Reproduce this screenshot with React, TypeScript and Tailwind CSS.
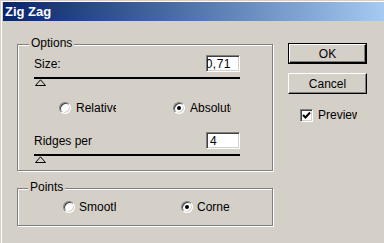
import React from 'react';

const font = { fontFamily: '"Liberation Sans", Arial, sans-serif' };

const Radio = ({ checked }: { checked?: boolean }) => (
  <span className="relative w-[12px] h-[12px] rounded-full bg-white border border-t-[#808080] border-l-[#808080] border-b-white border-r-white shadow-[inset_1px_1px_0_#404040,inset_-1px_-1px_0_#d4d0c8] shrink-0 flex items-center justify-center">
    {checked && <span className="w-[4px] h-[4px] rounded-full bg-black" />}
  </span>
);

const Field = ({ value, clip }: { value: string; clip?: boolean }) => (
  <div className="w-[34px] h-[17px] bg-white border border-t-[#808080] border-l-[#808080] border-b-white border-r-white shadow-[inset_1px_1px_0_#404040,inset_-1px_-1px_0_#d4d0c8] overflow-hidden flex items-center">
    {clip ? (
      <div className="w-full flex justify-end pr-[8px] text-[12px] leading-[14px] tracking-[0.5px] whitespace-nowrap">{value}</div>
    ) : (
      <div className="pl-[3px] text-[12px] leading-[14px]">{value}</div>
    )}
  </div>
);

const Slider = () => (
  <div className="flex flex-col">
    <div className="h-[2px] w-full bg-black" />
    <svg width="12" height="7" viewBox="0 0 12 7" className="ml-[1px]">
      <path d="M0.5 6.5 L5.5 0.8 L10.5 6.5 Z" fill="#d4d0c8" stroke="#000" strokeWidth="1" />
    </svg>
  </div>
);

const Option = ({ checked, label, w, gap = 'ml-[5px]' }: { checked?: boolean; label: string; w: string; gap?: string }) => (
  <div className="flex items-center">
    <Radio checked={checked} />
    <span className={`${gap} ${w} overflow-hidden whitespace-nowrap text-[12px] leading-[14px]`}>{label}</span>
  </div>
);

const Group = ({ title, legendLeft, className, children }: { title: string; legendLeft: string; className: string; children: React.ReactNode }) => (
  <div className={`relative border border-[#808080] shadow-[inset_1px_1px_0_#fff,1px_1px_0_#fff] ${className}`}>
    <span className={`absolute top-[-9px] ${legendLeft} px-[2px] bg-[#d4d0c8] text-[12px] leading-[14px]`}>{title}</span>
    {children}
  </div>
);

const Button = ({ label, isDefault }: { label: string; isDefault?: boolean }) => (
  <div className={`w-[79px] h-[21px] ${isDefault ? 'border border-black' : ''}`}>
    <div className="w-full h-full border border-t-white border-l-white border-b-black border-r-black shadow-[inset_-1px_-1px_0_#808080] flex items-center justify-center text-[12px] leading-[14px]">
      {label}
    </div>
  </div>
);

export default function App() {
  return (
    <div className="w-[384px] h-[243px] overflow-hidden bg-[#d4d0c8] text-black shadow-[inset_1px_1px_0_#d4d0c8,inset_2px_2px_0_#fff]" style={font}>
      {/* Title bar */}
      <div className="mt-[2px] ml-[3px] h-[19px] bg-gradient-to-r from-[#0a246a] to-[#a6caf0] flex items-center pl-[2px]">
        <span className="text-white font-bold text-[13px] leading-[15px]">Zig Zag</span>
      </div>

      <div className="flex pl-[17px] pt-[22px]">
        {/* Left column */}
        <div className="w-[256px] mt-[1px] flex flex-col">
          <Group title="Options" legendLeft="left-[11px]" className="h-[127px] pl-[16px] pr-[32px] pt-[10px]">
            <div className="flex items-center justify-between">
              <span className="text-[12px] leading-[14px]">Size:</span>
              <Field value="0,71" clip />
            </div>
            <div className="mt-[5px]">
              <Slider />
            </div>
            <div className="mt-[15px] pl-[25px] flex">
              <div className="w-[114px]">
                <Option label="Relative" w="w-[40px]" />
              </div>
              <Option checked label="Absolute" w="w-[41px]" />
            </div>
            <div className="mt-[17px] flex items-center justify-between">
              <span className="text-[12px] leading-[14px]">Ridges per</span>
              <Field value="4" />
            </div>
            <div className="mt-[5px]">
              <Slider />
            </div>
          </Group>

          <Group title="Points" legendLeft="left-[10px]" className="mt-[17px] h-[38px] pl-[45px] pt-[11px]">
            <div className="flex">
              <div className="w-[118px]">
                <Option label="Smooth" w="w-[37px]" gap="ml-[4px]" />
              </div>
              <Option checked label="Corner" w="w-[33px]" gap="ml-[4px]" />
            </div>
          </Group>
        </div>

        {/* Right column */}
        <div className="ml-[15px] flex flex-col">
          <Button label="OK" isDefault />
          <div className="mt-[9px]">
            <Button label="Cancel" />
          </div>
          <div className="mt-[14px] ml-[12px] flex items-center">
            <span className="w-[13px] h-[13px] bg-white border border-t-[#808080] border-l-[#808080] border-b-white border-r-white shadow-[inset_1px_1px_0_#404040,inset_-1px_-1px_0_#d4d0c8] flex items-center justify-center">
              <svg width="9" height="9" viewBox="0 0 9 9">
                <path d="M1 4 L3.5 6.5 L8 1.5" fill="none" stroke="#000" strokeWidth="2" />
              </svg>
            </span>
            <span className="ml-[5px] w-[39px] overflow-hidden whitespace-nowrap text-[12px] leading-[14px]">Preview</span>
          </div>
        </div>
      </div>
    </div>
  );
}
